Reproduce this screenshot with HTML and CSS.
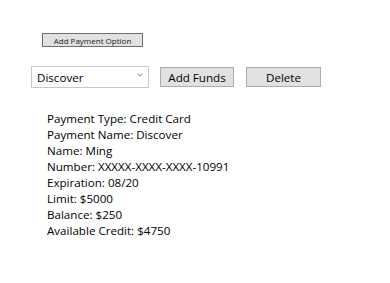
FILE: index.html
```html
<!DOCTYPE html>
<html>
<head>
<meta charset="utf-8">
<link rel="stylesheet" href="styles.css">
</head>
<body>
<div class="page">
  <div class="top">
    <button class="btn small">Add Payment Option</button>
  </div>
  <div class="row">
    <div class="select">
      <span>Discover</span>
      <svg class="chev" width="6" height="4" viewBox="0 0 6 4"><path d="M0.5 0.8 L3 3.2 L5.5 0.8" fill="none" stroke="#808080" stroke-width="1"/></svg>
    </div>
    <button class="btn funds">Add Funds</button>
    <button class="btn del">Delete</button>
  </div>
  <div class="details">
    <div>Payment Type: Credit Card</div>
    <div>Payment Name: Discover</div>
    <div>Name: Ming</div>
    <div>Number: XXXXX-XXXX-XXXX-10991</div>
    <div>Expiration: 08/20</div>
    <div>Limit: $5000</div>
    <div>Balance: $250</div>
    <div>Available Credit: $4750</div>
  </div>
</div>
</body>
</html>
```

FILE: styles.css
```css
html, body {
  margin: 0;
  padding: 0;
  background: #ffffff;
}
.page {
  font-family: "Open Sans", "Noto Sans", sans-serif;
  color: #000;
  width: 390px;
  height: 283px;
  overflow: hidden;
}
.top {
  padding: 33px 0 0 42px;
  display: flex;
}
.btn {
  box-sizing: border-box;
  background: #e1e1e1;
  border: 1px solid #adadad;
  color: #000;
  font-family: "Open Sans", "Noto Sans", sans-serif;
  padding: 0;
  margin: 0;
  display: flex;
  align-items: center;
  justify-content: center;
}
.small {
  width: 101px;
  height: 14px;
  font-size: 8px;
  border-color: #707070;
  color: #222;
}
.row {
  display: flex;
  align-items: flex-start;
  margin-top: 19px;
  padding-left: 31px;
}
.select {
  box-sizing: border-box;
  width: 118px;
  height: 22px;
  border: 1px solid #c8c8c8;
  background: #fff;
  display: flex;
  align-items: center;
  justify-content: space-between;
  padding: 0 5px 0 5px;
  font-size: 11.6px;
}
.chev {
  margin-top: -4px;
}
.funds {
  width: 74px;
  height: 20px;
  margin-left: 11px;
  margin-top: 1px;
  font-size: 11.6px;
}
.del {
  width: 75px;
  height: 20px;
  margin-left: 12px;
  margin-top: 1px;
  font-size: 11.6px;
}
.details {
  margin-top: 23px;
  padding-left: 47px;
  font-size: 11.6px;
  line-height: 16px;
}
```
